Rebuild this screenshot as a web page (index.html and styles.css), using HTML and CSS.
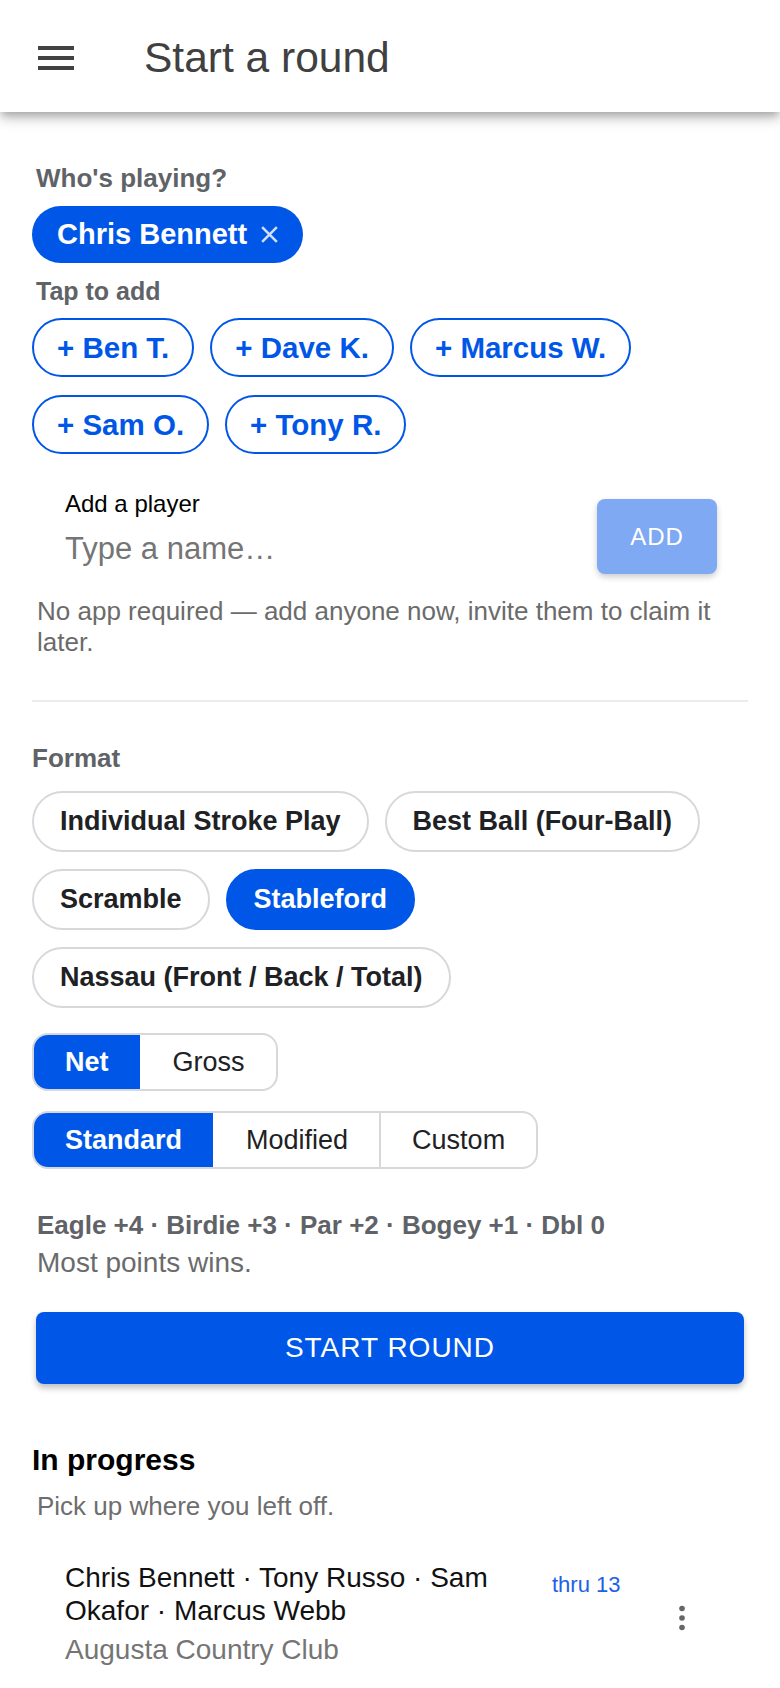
FILE: index.html
```html
<!DOCTYPE html>
<html lang="en">
<head>
  <meta charset="UTF-8">
  <meta name="viewport" content="width=device-width, initial-scale=1.0">
  <title>Start a round</title>
  <link rel="stylesheet" href="styles.css">
</head>
<body>

  <header class="app-bar">
    <button class="menu-btn" aria-label="Menu">
      <svg viewBox="0 0 24 24"><path d="M3 18h18v-2H3v2zm0-5h18v-2H3v2zm0-7v2h18V6H3z"/></svg>
    </button>
    <h1 class="app-title">Start a round</h1>
  </header>

  <main class="page">
    <!-- players -->
    <section class="players">
      <div class="label">Who's playing?</div>
      <div class="chip-row">
        <span class="chip chip-selected">Chris Bennett
          <svg class="chip-x" viewBox="0 0 20 20"><path d="M3 3l14 14M17 3L3 17"/></svg>
        </span>
      </div>

      <div class="label label-sm">Tap to add</div>
      <div class="chip-row">
        <span class="chip chip-add">+ Ben T.</span>
        <span class="chip chip-add">+ Dave K.</span>
        <span class="chip chip-add">+ Marcus W.</span>
        <span class="chip chip-add">+ Sam O.</span>
        <span class="chip chip-add">+ Tony R.</span>
      </div>

      <div class="add-row">
        <label class="field">
          <span class="field-label">Add a player</span>
          <input class="field-input" type="text" placeholder="Type a name…">
        </label>
        <button class="add-btn" disabled>ADD</button>
      </div>
      <p class="hint">No app required — add anyone now, invite them to claim it later.</p>
    </section>

    <hr class="divider">

    <!-- format -->
    <section class="format">
      <div class="label label-flush">Format</div>
      <div class="format-chips">
        <span class="fchip">Individual Stroke Play</span>
        <span class="fchip">Best Ball (Four-Ball)</span>
        <span class="fchip">Scramble</span>
        <span class="fchip fchip-on">Stableford</span>
        <span class="fchip">Nassau (Front / Back / Total)</span>
      </div>

      <div class="segmented">
        <span class="seg seg-on">Net</span>
        <span class="seg">Gross</span>
      </div>
      <div class="segmented seg-gap">
        <span class="seg seg-on">Standard</span>
        <span class="seg">Modified</span>
        <span class="seg">Custom</span>
      </div>

      <div class="points">Eagle +4 · Birdie +3 · Par +2 · Bogey +1 · Dbl 0</div>
      <div class="points-note">Most points wins.</div>

      <button class="start-btn">START ROUND</button>
    </section>

    <!-- in progress -->
    <section class="progress">
      <h2 class="progress-title">In progress</h2>
      <p class="progress-sub">Pick up where you left off.</p>

      <div class="round-item">
        <div class="round-text">
          <div class="round-players">Chris Bennett · Tony Russo · Sam Okafor · Marcus Webb</div>
          <div class="round-course">Augusta Country Club</div>
        </div>
        <div class="round-meta">thru 13</div>
        <button class="round-more" aria-label="More">
          <svg viewBox="0 0 48 48"><circle cx="24" cy="14.5" r="2.8"/><circle cx="24" cy="24" r="2.8"/><circle cx="24" cy="33.5" r="2.8"/></svg>
        </button>
      </div>
    </section>
  </main>

</body>
</html>
```

FILE: styles.css
```css
html, body {
  font-family: "Liberation Sans", Arial, sans-serif;
}
body {
  margin: 0;
  background-color: #fff;
  color: #202124;
}
button {
  font-family: inherit;
}

/* top bar */
.app-bar {
  position: relative;
  z-index: 1;
  height: 112px;
  display: flex;
  align-items: center;
  padding-left: 32px;
  background-color: #fff;
  box-shadow: 0 4px 8px -2px rgba(0, 0, 0, 0.25), 0 8px 10px rgba(0, 0, 0, 0.12), 0 2px 20px rgba(0, 0, 0, 0.1);
}
.menu-btn {
  width: 48px;
  height: 48px;
  padding: 0;
  margin-top: 4px;
  border: none;
  background: none;
  color: #424242;
}
.menu-btn svg {
  display: block;
  width: 48px;
  height: 48px;
  fill: currentColor;
}
.app-title {
  margin: 4px 0 0 64px;
  font-size: 42.5px;
  font-weight: 400;
  color: #404040;
}

.page {
  padding: 50px 32px 0;
}

/* section labels */
.label {
  margin: 0 4px;
  font-size: 26px;
  line-height: 32px;
  font-weight: 700;
  color: #5f6368;
}
.label-sm {
  margin-top: 13px;
  font-size: 25px;
  line-height: 30px;
}
.label-flush {
  margin: 40px 0 0;
}

/* player chips */
.chip-row {
  display: flex;
  flex-wrap: wrap;
  gap: 18px 16px;
  margin-top: 12px;
}
.chip {
  display: inline-flex;
  align-items: center;
  box-sizing: border-box;
  border-radius: 999px;
  font-size: 29px;
  font-weight: 700;
  white-space: nowrap;
}
.chip-selected {
  height: 57px;
  padding: 0 23px 0 25px;
  gap: 12px;
  background-color: #0057e7;
  color: #fff;
}
.chip-x {
  width: 21px;
  height: 21px;
  fill: none;
  stroke: #d3e0fb;
  stroke-width: 2.4;
}
.chip-add {
  height: 59px;
  padding: 0 23px;
  border: 2px solid #0057e7;
  color: #0057e7;
  font-size: 29.5px;
}

/* add player field */
.add-row {
  display: flex;
  align-items: flex-start;
  margin-top: 36px;
  padding-right: 31px;
}
.field {
  flex: 1;
  display: flex;
  flex-direction: column;
  padding-left: 33px;
}
.field-label {
  font-size: 24px;
  line-height: 28px;
  color: #000;
}
.field-input {
  height: 40px;
  margin-top: 11px;
  padding: 0;
  border: none;
  outline: none;
  background: transparent;
  font-family: inherit;
  font-size: 31px;
  color: #202124;
}
.field-input::placeholder {
  color: #757575;
}
.add-btn {
  width: 120px;
  height: 75px;
  margin-top: 9px;
  border: none;
  border-radius: 8px;
  background-color: #80a9f3;
  color: #fff;
  font-size: 24px;
  letter-spacing: 1px;
  box-shadow: 0 3px 6px rgba(0, 0, 0, 0.2);
}
.hint {
  margin: 22px 0 0 5px;
  font-size: 26px;
  line-height: 31px;
  color: #6b6b6b;
}

.divider {
  height: 2px;
  margin: 42px 0 0;
  border: none;
  background-color: #ececec;
}

/* format chips */
.format-chips {
  display: flex;
  flex-wrap: wrap;
  gap: 17px 16px;
  margin-top: 17px;
}
.fchip {
  display: inline-flex;
  align-items: center;
  box-sizing: border-box;
  height: 61px;
  padding: 0 26px;
  border: 2px solid #d6d8dc;
  border-radius: 999px;
  font-size: 27px;
  font-weight: 700;
  color: #202124;
  white-space: nowrap;
}
.fchip-on {
  background-color: #0057e7;
  border-color: #0057e7;
  color: #fff;
}

/* segmented toggles */
.segmented {
  display: flex;
  width: fit-content;
  margin-top: 25px;
  border: 2px solid #d6d8dc;
  border-radius: 16px;
  overflow: hidden;
}
.seg-gap {
  margin-top: 20px;
}
.seg {
  display: flex;
  align-items: center;
  height: 54px;
  padding: 0 31px;
  font-size: 27px;
  color: #202124;
}
.seg + .seg {
  border-left: 2px solid #d6d8dc;
}
.seg-on {
  background-color: #0057e7;
  color: #fff;
  font-weight: 700;
}
.seg-on + .seg {
  border-left-color: #fff;
}

/* stableford points */
.points {
  margin: 37px 0 0 5px;
  font-size: 26px;
  line-height: 38px;
  font-weight: 700;
  color: #5f6368;
}
.points-note {
  margin-left: 5px;
  font-size: 28px;
  line-height: 38px;
  color: #6b6b6b;
}

.start-btn {
  display: block;
  width: calc(100% - 8px);
  height: 72px;
  margin: 30px 4px 0;
  border: none;
  border-radius: 8px;
  background-color: #0057e7;
  color: #fff;
  font-size: 28px;
  letter-spacing: 1px;
  box-shadow: 0 4px 6px rgba(0, 0, 0, 0.25);
}

/* in progress list */
.progress-title {
  margin: 58px 0 0;
  font-size: 30px;
  line-height: 36px;
  font-weight: 700;
  color: #000;
}
.progress-sub {
  margin: 12px 0 0 5px;
  font-size: 26px;
  line-height: 32px;
  color: #6e6e6e;
}
.round-item {
  display: flex;
  margin-top: 39px;
  padding: 0 42px 0 33px;
}
.round-text {
  flex: 1;
}
.round-players {
  font-size: 28px;
  line-height: 33px;
  color: #111;
}
.round-course {
  margin-top: 6px;
  font-size: 28px;
  line-height: 33px;
  color: #757575;
}
.round-meta {
  width: 106px;
  margin-left: 24px;
  padding-top: 10px;
  font-size: 22px;
  line-height: 28px;
  color: #1a62e6;
}
.round-more {
  align-self: center;
  width: 48px;
  height: 48px;
  margin-top: 8px;
  padding: 0;
  border: none;
  background: none;
}
.round-more svg {
  display: block;
  width: 48px;
  height: 48px;
  fill: #666;
}
```
